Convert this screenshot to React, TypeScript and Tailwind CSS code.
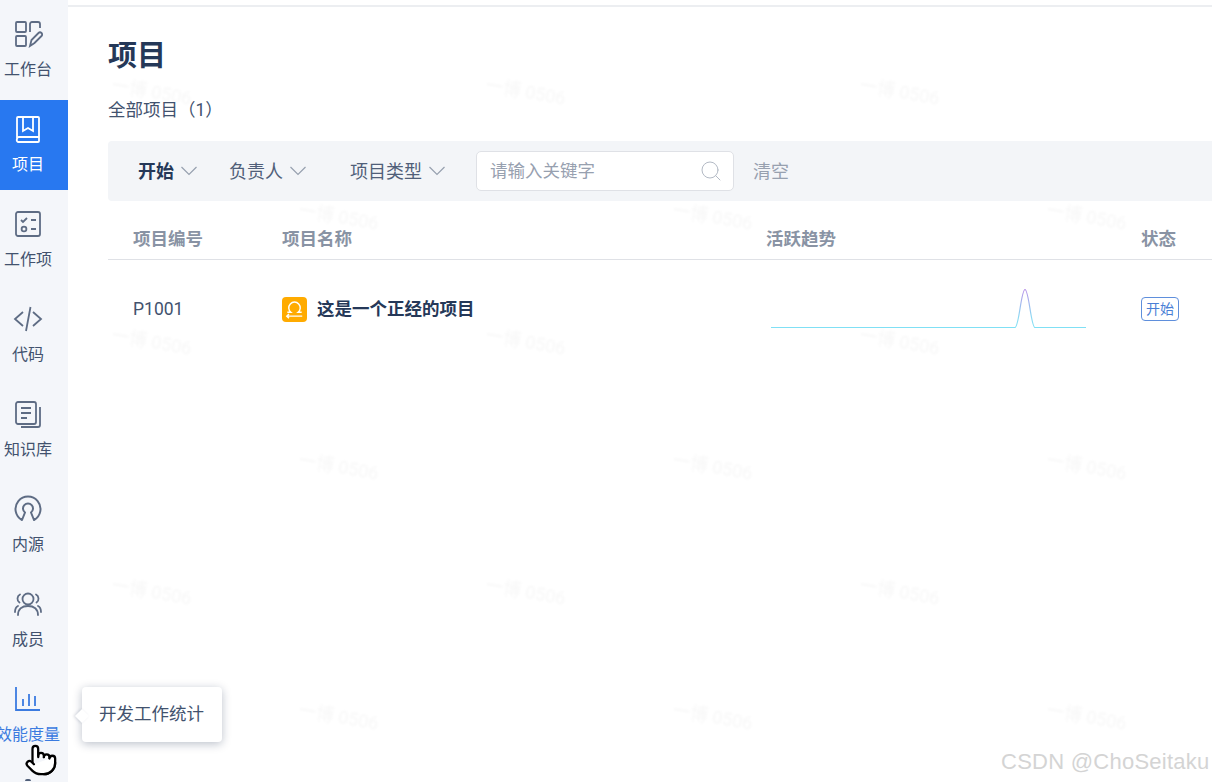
import { Search, Pointer } from "lucide-react";
import type { ReactNode } from "react";

const marks = [
  [111, 78], [485, 78], [859, 78],
  [298, 203], [672, 203], [1046, 203],
  [111, 328], [485, 328], [859, 328],
  [298, 453], [672, 453], [1046, 453],
  [111, 578], [485, 578], [859, 578],
  [298, 703], [672, 703], [1046, 703],
];

const navItems: { label: string; icon: ReactNode; active?: boolean; hover?: boolean }[] = [
  {
    label: "工作台",
    icon: (
      <svg width="30" height="30" viewBox="0 0 30 30" fill="none" stroke="currentColor" strokeWidth="1.8">
        <rect x="3" y="3" width="10" height="10" rx="1" />
        <rect x="3" y="17" width="10" height="10" rx="1" />
        <path d="M17 13V5a2 2 0 0 1 2-2h6a2 2 0 0 1 2 2v4" />
        <path d="M17 27l1.5-6 7-7a2 2 0 0 1 3 3l-7 7z" />
      </svg>
    ),
  },
  {
    label: "项目",
    active: true,
    icon: (
      <svg width="30" height="30" viewBox="0 0 30 30" fill="none" stroke="currentColor" strokeWidth="1.8">
        <path d="M4 25V4a1 1 0 0 1 1-1h20a1 1 0 0 1 1 1v23a1 1 0 0 1-1 1H6a2 2 0 0 1-2-3a2 2 0 0 1 2-2h20" />
        <path d="M10 3v14l5-3 5 3V3" />
      </svg>
    ),
  },
  {
    label: "工作项",
    icon: (
      <svg width="30" height="30" viewBox="0 0 30 30" fill="none" stroke="currentColor" strokeWidth="1.8">
        <rect x="3" y="3" width="24" height="24" rx="2" />
        <path d="M8 11l2 2 4-4M18 11h5M18 20h5" />
        <circle cx="11" cy="20" r="2.4" />
      </svg>
    ),
  },
  {
    label: "代码",
    icon: (
      <svg width="30" height="30" viewBox="0 0 30 30" fill="none" stroke="currentColor" strokeWidth="1.8">
        <path d="M10 8l-8 7 8 7M20 8l8 7-8 7M17.5 3l-4.5 24" />
      </svg>
    ),
  },
  {
    label: "知识库",
    icon: (
      <svg width="30" height="30" viewBox="0 0 30 30" fill="none" stroke="currentColor" strokeWidth="1.8">
        <rect x="3" y="3" width="20" height="22" rx="2" />
        <path d="M8 9h10M8 14h10M8 19h6" />
        <path d="M27 8v18a2 2 0 0 1-2 2H8" />
      </svg>
    ),
  },
  {
    label: "内源",
    icon: (
      <svg width="30" height="30" viewBox="0 0 30 30" fill="none" stroke="currentColor" strokeWidth="2">
        <path d="M9 26A12.5 12.5 0 1 1 21 26L18 18.500A5 5 0 1 0 12 18.500Z" strokeLinejoin="round" />
      </svg>
    ),
  },
  {
    label: "成员",
    icon: (
      <svg width="30" height="30" viewBox="0 0 30 30" fill="none" stroke="currentColor" strokeWidth="1.8" strokeLinecap="round">
        <circle cx="15" cy="10" r="5.5" />
        <path d="M5 26c0-6 4-9 10-9s10 3 10 9" />
        <path d="M7 5.500c-3 1.500-3.500 6-0.500 8M23 5.500c3 1.500 3.500 6 0.500 8M2 23c0-3 1-5 3-6M28 23c0-3-1-5-3-6" />
      </svg>
    ),
  },
  {
    label: "效能度量",
    hover: true,
    icon: (
      <svg width="30" height="30" viewBox="0 0 30 30" fill="none" stroke="currentColor" strokeWidth="1.8">
        <path d="M3 3v23h24M10 15v7M16 10v12M22 12v10" />
      </svg>
    ),
  },
];

function NavItem({ label, icon, active, hover }: (typeof navItems)[number]) {
  const tone = active
    ? "bg-[#2878f0] text-white"
    : hover
      ? "text-[#3b7be0]"
      : "text-[#5e6c84]";
  return (
    <div className={`flex h-[90px] shrink-0 flex-col items-center justify-start pr-3 pt-[14px] ${tone}`}>
      {icon}
      <span className={`mt-[9px] whitespace-nowrap text-[16px] leading-[24px] ${active || hover ? "" : "text-[#42526e]"}`}>
        {label}
      </span>
    </div>
  );
}

function FilterLabel({ text, bold, className }: { text: string; bold?: boolean; className: string }) {
  return (
    <div className={`flex items-center gap-[7px] ${className}`}>
      <span className={bold ? "font-bold text-[#253858]" : "text-[#505f79]"}>{text}</span>
      <svg width="16" height="10" viewBox="0 0 16 10" fill="none" stroke="#97a0af" strokeWidth="1.2">
        <path d="M0.500 1l7.500 7.500L15.500 1" />
      </svg>
    </div>
  );
}

function TrendChart() {
  return (
    <svg width="316" height="42" viewBox="0 0 316 42" fill="none">
      <defs>
        <linearGradient id="trend" x1="0" y1="0" x2="0" y2="1">
          <stop offset="0" stopColor="#b792e8" />
          <stop offset="0.7" stopColor="#8fd8f2" />
          <stop offset="1" stopColor="#80e0f5" />
        </linearGradient>
      </defs>
      <path d="M0 39.500H244C248 39.500 250 2 254 1.500C258 2 260 39.500 264 39.500H315" stroke="url(#trend)" strokeWidth="1.200" />
    </svg>
  );
}

export default function App() {
  return (
    <div
      className="relative flex h-[782px] w-[1212px] overflow-hidden bg-white text-[17.5px]"
      style={{ fontFamily: 'Roboto, "Noto Sans CJK SC", sans-serif' }}
    >
      <aside className="flex w-[68px] shrink-0 flex-col gap-[5px] bg-[#f4f6fa] pt-[5px]">
        {navItems.map((item) => (
          <NavItem key={item.label} {...item} />
        ))}
      </aside>

      <main className="mt-[5px] flex-1 border-t-2 border-[#eceef1] pl-[40px]">
        <h1 className="mt-[28px] text-[29px] font-bold leading-[42px] text-[#253858]">项目</h1>
        <p className="mt-[20px] leading-[26px] text-[#42526e]">全部项目（1）</p>

        <div className="mt-[18px] flex h-[60px] items-center rounded-l-[4px] bg-[#f3f5f8] text-[18px]">
          <FilterLabel text="开始" bold className="ml-[30px]" />
          <FilterLabel text="负责人" className="ml-[32px]" />
          <FilterLabel text="项目类型" className="ml-[44px]" />
          <div className="ml-[31px] flex h-[40px] w-[258px] items-center justify-between rounded-[5px] border border-[#dfe1e6] bg-white pl-[13px] pr-[10px]">
            <span className="text-[17.5px] text-[#97a0af]">请输入关键字</span>
            <Search size={24} strokeWidth={1} className="text-[#b3bac5]" />
          </div>
          <span className="ml-[19px] text-[#97a0af]">清空</span>
        </div>

        <div className="flex h-[59px] items-center border-b border-[#dfe1e6] pt-[19px] font-bold text-[#8993a4]">
          <span className="ml-[25px] w-[149px]">项目编号</span>
          <span className="w-[484px]">项目名称</span>
          <span className="w-[375px]">活跃趋势</span>
          <span>状态</span>
        </div>

        <div className="flex h-[98px] items-center">
          <span className="ml-[25px] w-[149px] text-[#42526e]">P1001</span>
          <div className="flex w-[489px] items-center gap-[10px]">
            <span className="flex h-[25px] w-[25px] items-center justify-center rounded-[4px] bg-[#ffab00]">
              <svg width="21" height="21" viewBox="0 0 19 19" fill="none" stroke="white" strokeWidth="1.300">
                <path d="M3 12H6.200a5.200 5.200 0 1 1 6.600 0H16" />
                <path d="M2.500 15.500H16.500M4.500 13.500l-2 2 2 2" />
              </svg>
            </span>
            <span className="font-bold text-[#253858]">这是一个正经的项目</span>
          </div>
          <div className="w-[370px]">
            <TrendChart />
          </div>
          <span className="flex h-[24px] w-[38px] items-center justify-center rounded-[4px] border border-[#5f8fdc] text-[14px] text-[#4a7fd6]">
            开始
          </span>
        </div>
      </main>

      {/* watermark */}
      <div className="pointer-events-none absolute inset-0">
        {marks.map(([x, y]) => (
          <span
            key={`${x}-${y}`}
            className="absolute rotate-[10deg] whitespace-nowrap text-[18px] text-black/[0.035] blur-[1px]"
            style={{ left: x, top: y }}
          >
            一博 0506
          </span>
        ))}
      </div>

      <div className="absolute left-[82px] top-[687px] flex h-[55px] w-[140px] items-center rounded-[4px] bg-white pl-[17px] text-[#42526e] shadow-[0_2px_10px_rgba(9,30,66,0.28)]">
        <span className="absolute left-[-5px] top-[24px] h-[10px] w-[10px] rotate-45 bg-white shadow-[-1px_1px_3px_rgba(9,30,66,0.15)]" />
        <span className="relative">开发工作统计</span>
      </div>

      <Pointer size={34} strokeWidth={1.6} fill="white" className="absolute left-[24px] top-[743px] text-black" />
      <span className="absolute left-[25px] top-[779px] h-[2px] w-[6px] rounded-t bg-[#505f79]" />

      <span
        className="absolute left-[1001px] top-[749px] whitespace-nowrap text-[22px] leading-[26px] tracking-[0.25px] text-[#d4d4d4]"
        style={{ fontFamily: '"Liberation Sans", sans-serif' }}
      >
        CSDN @ChoSeitaku
      </span>
    </div>
  );
}
